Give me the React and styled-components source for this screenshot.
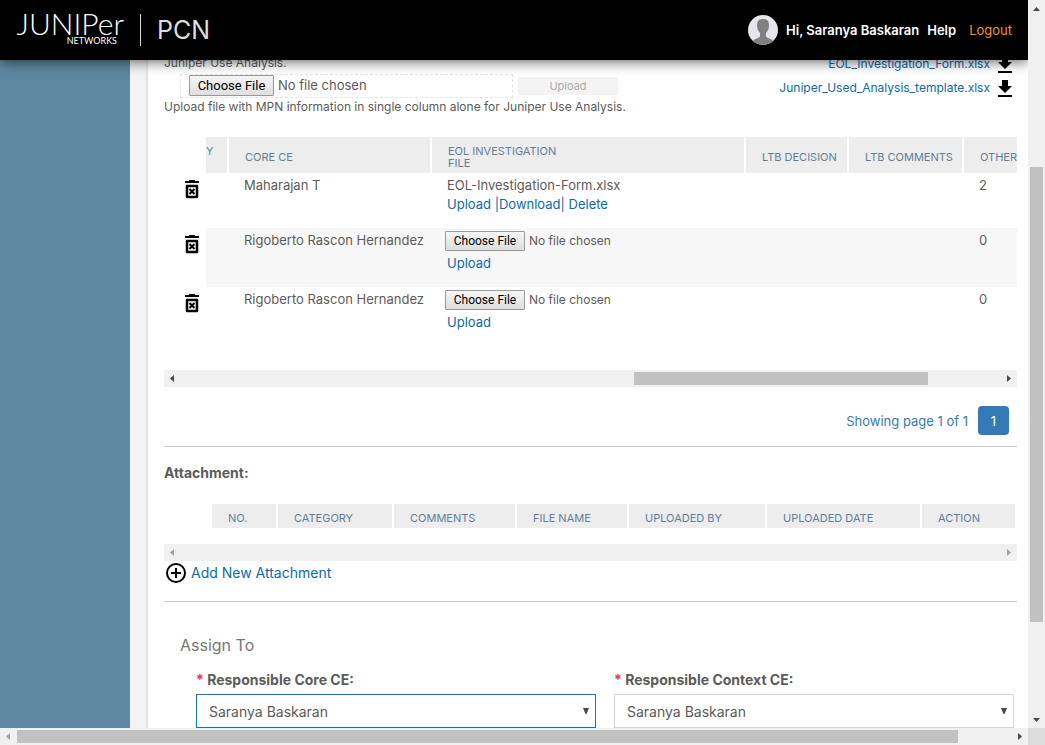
import React from "react";
import styled, { createGlobalStyle } from "styled-components";

const GlobalStyle = createGlobalStyle`
  *, *::before, *::after { box-sizing: border-box; }
  body {
    margin: 0;
    font-family: Inter, "Liberation Sans", sans-serif;
    font-size: 14px;
    line-height: 18px;
    color: #5c5b5b;
    background: #fff;
  }
`;

const Window = styled.div`
  display: grid;
  grid-template-columns: minmax(0, 1fr) 17px;
  grid-template-rows: minmax(0, 1fr) 17px;
  height: 100vh;
  overflow: hidden;
`;

const Viewport = styled.div`
  display: flex;
  flex-direction: column;
  overflow: hidden;
`;

const Header = styled.header`
  display: flex;
  align-items: center;
  flex: none;
  height: 60px;
  padding: 0 16px;
  background: #000;
  color: #fff;
  box-shadow: 0 2px 12px rgba(0, 0, 0, 0.6);
  position: relative;
  z-index: 1;
`;

const Logo = styled.div`
  display: flex;
  flex-direction: column;
  align-items: flex-end;
  width: 108px;
  padding-bottom: 6px;
  font-family: Lato, sans-serif;
  font-weight: 300;
  white-space: nowrap;
`;

const LogoName = styled.span`
  font-size: 30px;
  line-height: 26px;
`;

const LogoSub = styled.span`
  margin-right: 7px;
  font-size: 9px;
  line-height: 9px;
  font-weight: 400;
`;

const Product = styled.h1`
  margin: 0 auto 0 16px;
  padding-left: 16px;
  border-left: 1px solid #ddd;
  font-size: 25px;
  line-height: 32px;
  font-weight: 400;
  color: #ddd;
`;

const Avatar = styled.svg`
  width: 30px;
  height: 30px;
  margin-right: 8px;
`;

const UserNav = styled.nav`
  display: flex;
  align-items: center;
  font-size: 13px;
  font-weight: 600;
  white-space: nowrap;
`;

const NavLink = styled.a`
  margin-left: ${(p) => (p.$accent ? 13 : 8)}px;
  color: ${(p) => (p.$accent ? "#f7941e" : "#fff")};
  font-weight: ${(p) => (p.$accent ? 400 : 600)};
  text-decoration: none;
`;

const Body = styled.div`
  display: flex;
  flex: 1;
  min-height: 0;
`;

const Sidebar = styled.aside`
  flex: none;
  width: 130px;
  background: #5f87a0;
`;

const Gutter = styled.div`
  flex: none;
  width: 18px;
  background: #f3f3f3;
  border-right: 2px solid #e4e4e4;
`;

const Panel = styled.main`
  flex: 1;
  min-width: 0;
  overflow: hidden;
  padding: 0 11px 0 16px;
`;

/* The page is part-way scrolled, so the first lines run up under the header. */
const Scrolled = styled.div`
  margin-top: -8px;
`;

const UploadArea = styled.section`
  display: flex;
  justify-content: space-between;
  height: 85px;
  font-size: 12px;
`;

const UploadText = styled.p`
  margin: 0;
  line-height: ${(p) => (p.$tall ? 22 : 18)}px;
`;

const UploadRow = styled.form`
  display: flex;
  align-items: center;
  gap: 5px;
  margin-left: 16px;
  height: 24px;
`;

const DropBox = styled.label`
  display: block;
  width: 333px;
  height: 24px;
  padding-left: 8px;
  border: 1px dashed #e6e6e6;
`;

const FileInput = styled.input`
  display: block;
  width: 240px;
  height: ${(p) => (p.$large ? 22 : 20)}px;
  font-family: inherit;
  font-size: ${(p) => (p.$large ? 13 : 12)}px;
  line-height: 18px;
  color: #5c5b5b;

  &::file-selector-button {
    width: ${(p) => (p.$large ? 85 : 80)}px;
    height: ${(p) => (p.$large ? 21 : 20)}px;
    margin: 0 4px 0 0;
    padding: 0;
    border: 1px solid #999;
    border-radius: 1px;
    background: linear-gradient(#f6f6f6, #dedede);
    color: #000;
    font-family: Roboto, sans-serif;
    font-size: ${(p) => (p.$large ? 13 : 12)}px;
  }
`;

const UploadButton = styled.button`
  width: 100px;
  height: 18px;
  padding: 0;
  border: 0;
  background: #f3f3f3;
  color: #aaa;
  font-family: inherit;
  font-size: 11px;
`;

const Downloads = styled.div`
  display: flex;
  flex-direction: column;
  align-items: flex-end;
  padding-right: 5px;
  font-size: 12px;
`;

const DownloadLink = styled.a`
  display: flex;
  align-items: center;
  gap: 8px;
  height: 24px;
  color: #0b6ab0;
  text-decoration: none;
  white-space: nowrap;
`;

const Link = styled.a`
  color: #0b6ab0;
  text-decoration: none;
`;

const Table = styled.table`
  width: 100%;
  table-layout: fixed;
  border-collapse: separate;
  border-spacing: 0;
`;

const HeadCell = styled.th`
  height: ${(p) => (p.$short ? 24 : 36)}px;
  padding: ${(p) => (p.$clipped ? "8px 0 4px" : "8px 0 4px 16px")};
  border-right: ${(p) => (p.$last ? 0 : 2)}px solid #fff;
  background: #ededed;
  color: #5f7f99;
  font-size: 11px;
  line-height: 12px;
  font-weight: 400;
  text-align: left;
  vertical-align: ${(p) => (p.$clipped ? "top" : "middle")};
  white-space: ${(p) => (p.$wrap ? "pre-line" : "nowrap")};
  overflow: hidden;
`;

const Row = styled.tr`
  height: ${(p) => (p.$tall ? 59 : 55)}px;
`;

const Cell = styled.td`
  padding: 3px 0 0 ${(p) => (p.$file ? 13 : 15)}px;
  background: ${(p) => (p.$shaded ? "#f7f7f7" : "transparent")};
  font-size: 13px;
  vertical-align: top;
  white-space: nowrap;
`;

const IconCell = styled.td`
  padding: 6px 0 0 18px;
  vertical-align: top;
`;

const IconButton = styled.button`
  display: block;
  width: 20px;
  height: 22px;
  padding: 0;
  border: 0;
  background: none;
`;

const FileLinks = styled.div`
  padding-left: 2px;
  line-height: ${(p) => (p.$spaced ? 24 : 19)}px;
`;

const Bar = styled.div`
  display: flex;
  align-items: center;
  flex-direction: ${(p) => (p.$vertical ? "column" : "row")};
  ${(p) => (p.$vertical ? "width" : "height")}: 17px;
  background: #f0f0f0;
`;

const Track = styled.div`
  display: flex;
  flex: 1;
  flex-direction: inherit;
  align-self: stretch;
  padding: ${(p) => (p.$vertical ? "0 2px" : "2px 0")};
`;

const Space = styled.div`
  flex: ${(p) => p.$grow} 1 0;
`;

const Thumb = styled(Space)`
  background: #c1c1c1;
`;

const Corner = styled.div`
  background: #dcdcdc;
`;

const TableFrame = styled.section`
  margin-top: ${(p) => (p.$attachments ? 21 : 0)}px;
`;

const TableBody = styled.div`
  padding: ${(p) => (p.$attachments ? "0 2px 16px 48px" : "0 0 24px")};
`;

const Pager = styled.nav`
  display: flex;
  align-items: center;
  justify-content: flex-end;
  gap: 10px;
  padding: 19px 8px 11px 0;
  font-size: 13px;
  color: #337ab7;
`;

const PageButton = styled.button`
  width: 31px;
  height: 29px;
  padding: 0;
  border: 0;
  border-radius: 4px;
  background: #337ab7;
  color: #fff;
  font-family: inherit;
  font-size: 13px;
`;

const Rule = styled.hr`
  margin: 0;
  border: 0;
  border-top: 1px solid #ccc;
`;

const SectionTitle = styled.h2`
  margin: 16px 0 0;
  font-size: 14px;
  line-height: 20px;
  font-weight: 700;
`;

const AddLink = styled(Link)`
  display: flex;
  align-items: center;
  gap: 3px;
  height: 24px;
  margin-bottom: 16px;
  font-size: 14px;
`;

const Assign = styled.form`
  padding: 33px 3px 0 32px;
`;

const AssignTitle = styled.h2`
  margin: 0 0 12px -16px;
  font-size: 16px;
  line-height: 20px;
  font-weight: 400;
  color: #777;
`;

const Fields = styled.div`
  display: grid;
  grid-template-columns: 1fr 1fr;
  gap: 18px;
`;

const Field = styled.label`
  display: flex;
  flex-direction: column;
  gap: 1px;
  font-size: 14px;
  line-height: 26px;
  font-weight: 700;
`;

const Required = styled.span`
  color: #f0323c;
`;

const SelectBox = styled.span`
  display: grid;
  align-items: center;
`;

const Select = styled.select`
  grid-area: 1 / 1;
  width: 100%;
  height: 34px;
  padding: 0 24px 0 12px;
  appearance: none;
  border: 1px solid ${(p) => (p.$active ? "#0b76b8" : "#d6d6d6")};
  border-radius: 0;
  background: #fff;
  color: #5c5b5b;
  font-family: inherit;
  font-size: 14px;
`;

const SelectArrow = styled.svg`
  grid-area: 1 / 1;
  justify-self: end;
  width: 6px;
  height: 6px;
  margin-right: 7px;
  pointer-events: none;
`;

const arrows = {
  left: "M10 5v7L6 8.500z",
  right: "M7 5v7l4-3.500z",
  up: "M5 11h7L8.500 7z",
  down: "M5 7h7l-3.500 4z",
};

function Arrow({ dir, faded }) {
  return (
    <svg width="17" height="17" fill={faded ? "#a3a3a3" : "#484848"} aria-hidden="true">
      <path d={arrows[dir]} />
    </svg>
  );
}

function ScrollBar({ vertical, parts, faded, atStart }) {
  return (
    <Bar $vertical={vertical} aria-hidden="true">
      <Arrow dir={vertical ? "up" : "left"} faded={faded || atStart} />
      <Track $vertical={vertical}>
        {parts && (
          <>
            <Space $grow={parts[0]} />
            <Thumb $grow={parts[1]} />
            <Space $grow={parts[2]} />
          </>
        )}
      </Track>
      <Arrow dir={vertical ? "down" : "right"} faded={faded} />
    </Bar>
  );
}

function DeleteIcon() {
  return (
    <svg width="20" height="22" viewBox="0 0 20 22" fill="none" stroke="#000" strokeWidth="2" aria-hidden="true">
      <path d="M3 3h14" />
      <path d="M7 2h6" />
      <path d="M5 7h10v11H5z" strokeWidth="2.500" strokeLinejoin="round" />
      <path d="M7.500 10l5 5M12.500 10l-5 5" />
    </svg>
  );
}

function DownloadIcon() {
  return (
    <svg width="14" height="18" viewBox="0 0 14 18" aria-hidden="true">
      <path d="M4 1h6v6h4l-7 7-7-7h4zM0 16h14v2H0z" fill="#000" />
    </svg>
  );
}

const rows = [
  { name: "Maharajan T", file: "EOL-Investigation-Form.xlsx", other: 2 },
  { name: "Rigoberto Rascon Hernandez", other: 0, shaded: true },
  { name: "Rigoberto Rascon Hernandez", other: 0 },
];

const attachmentColumns = [
  ["NO.", 66],
  ["CATEGORY", 116],
  ["COMMENTS", 123],
  ["FILE NAME", 112],
  ["UPLOADED BY", 138],
  ["UPLOADED DATE", 155],
  ["ACTION"],
];

function AssignField({ label, active }) {
  return (
    <Field>
      <span>
        <Required>*</Required> {label}
      </span>
      <SelectBox>
        <Select $active={active}>
          <option>Saranya Baskaran</option>
        </Select>
        <SelectArrow viewBox="0 0 6 6" aria-hidden="true">
          <path d="M0 0h6L3.500 6h-1z" fill="#484848" />
        </SelectArrow>
      </SelectBox>
    </Field>
  );
}

export default function App() {
  return (
    <Window>
      <GlobalStyle />
      <Viewport>
        <Header>
          <Logo>
            <LogoName>JUNIPer</LogoName>
            <LogoSub>NETWORKS</LogoSub>
          </Logo>
          <Product>PCN</Product>
          <UserNav>
            <Avatar viewBox="0 0 30 30" aria-hidden="true">
              <circle cx="15" cy="15" r="15" fill="#e5e6eb" />
              <path
                d="M9 10c0-4 2-6 6-6s6 2 6 6c0 3-1 6-3 8v3c0 2 5 2 7 5a15 15 0 0 1-20 0c2-3 7-3 7-5v-3c-2-2-3-5-3-8z"
                fill="#808080"
              />
            </Avatar>
            <span>Hi, Saranya Baskaran</span>
            <NavLink href="#help">Help</NavLink>
            <NavLink href="#logout" $accent>Logout</NavLink>
          </UserNav>
        </Header>
        <Body>
          <Sidebar />
          <Gutter />
          <Panel>
            <Scrolled>
              <UploadArea>
                <div>
                  <UploadText $tall>Juniper Use Analysis.</UploadText>
                  <UploadRow>
                    <DropBox>
                      <FileInput type="file" aria-label="MPN file" $large />
                    </DropBox>
                    <UploadButton type="button" disabled>Upload</UploadButton>
                  </UploadRow>
                  <UploadText>
                    Upload file with MPN information in single column alone for Juniper Use Analysis.
                  </UploadText>
                </div>
                <Downloads>
                  <DownloadLink href="#form">
                    EOL_Investigation_Form.xlsx
                    <DownloadIcon />
                  </DownloadLink>
                  <DownloadLink href="#template">
                    Juniper_Used_Analysis_template.xlsx
                    <DownloadIcon />
                  </DownloadLink>
                </Downloads>
              </UploadArea>

              <TableFrame>
                <TableBody>
                  <Table>
                    <colgroup>
                      <col width="42" />
                      <col width="23" />
                      <col width="203" />
                      <col />
                      <col width="103" />
                      <col width="115" />
                      <col width="53" />
                    </colgroup>
                    <thead>
                      <tr>
                        <td />
                        <HeadCell $clipped>Y</HeadCell>
                        <HeadCell>CORE CE</HeadCell>
                        <HeadCell $wrap>{"EOL INVESTIGATION\nFILE"}</HeadCell>
                        <HeadCell>LTB DECISION</HeadCell>
                        <HeadCell>LTB COMMENTS</HeadCell>
                        <HeadCell $last>OTHER</HeadCell>
                      </tr>
                    </thead>
                    <tbody>
                      {rows.map((row, i) => (
                        <Row key={i} $tall={!row.file}>
                          <IconCell>
                            <IconButton type="button" aria-label="Delete row">
                              <DeleteIcon />
                            </IconButton>
                          </IconCell>
                          <Cell $shaded={row.shaded} />
                          <Cell $shaded={row.shaded}>{row.name}</Cell>
                          <Cell $shaded={row.shaded} $file>
                            {row.file ? (
                              <>
                                <FileLinks>{row.file}</FileLinks>
                                <FileLinks>
                                  <Link href="#upload">Upload</Link> <Link href="#download">|Download|</Link>{" "}
                                  <Link href="#delete">Delete</Link>
                                </FileLinks>
                              </>
                            ) : (
                              <>
                                <FileInput type="file" aria-label="EOL investigation file" />
                                <FileLinks $spaced>
                                  <Link href="#upload">Upload</Link>
                                </FileLinks>
                              </>
                            )}
                          </Cell>
                          <Cell $shaded={row.shaded} />
                          <Cell $shaded={row.shaded} />
                          <Cell $shaded={row.shaded}>{row.other}</Cell>
                        </Row>
                      ))}
                    </tbody>
                  </Table>
                </TableBody>
                <ScrollBar parts={[453, 294, 72]} />
              </TableFrame>
              <Pager>
                <span>Showing page 1 of 1</span>
                <PageButton type="button">1</PageButton>
              </Pager>
              <Rule />

              <SectionTitle>Attachment:</SectionTitle>
              <TableFrame $attachments>
                <TableBody $attachments>
                  <Table>
                    <colgroup>
                      {attachmentColumns.map(([name, width]) => (
                        <col key={name} width={width} />
                      ))}
                    </colgroup>
                    <thead>
                      <tr>
                        {attachmentColumns.map(([name, width]) => (
                          <HeadCell key={name} $short $last={!width}>{name}</HeadCell>
                        ))}
                      </tr>
                    </thead>
                  </Table>
                </TableBody>
                <ScrollBar faded />
              </TableFrame>
              <AddLink href="#attachment">
                <svg width="24" height="24" fill="none" stroke="#000" strokeWidth="2" aria-hidden="true">
                  <circle cx="12" cy="12" r="9" />
                  <path d="M12 7v10M7 12h10" />
                </svg>
                Add New Attachment
              </AddLink>
              <Rule />

              <Assign>
                <AssignTitle>Assign To</AssignTitle>
                <Fields>
                  <AssignField label="Responsible Core CE:" active />
                  <AssignField label="Responsible Context CE:" />
                </Fields>
              </Assign>
            </Scrolled>
          </Panel>
        </Body>
      </Viewport>
      <ScrollBar vertical parts={[150, 455, 89]} />
      <ScrollBar atStart parts={[0, 941, 53]} />
      <Corner />
    </Window>
  );
}
